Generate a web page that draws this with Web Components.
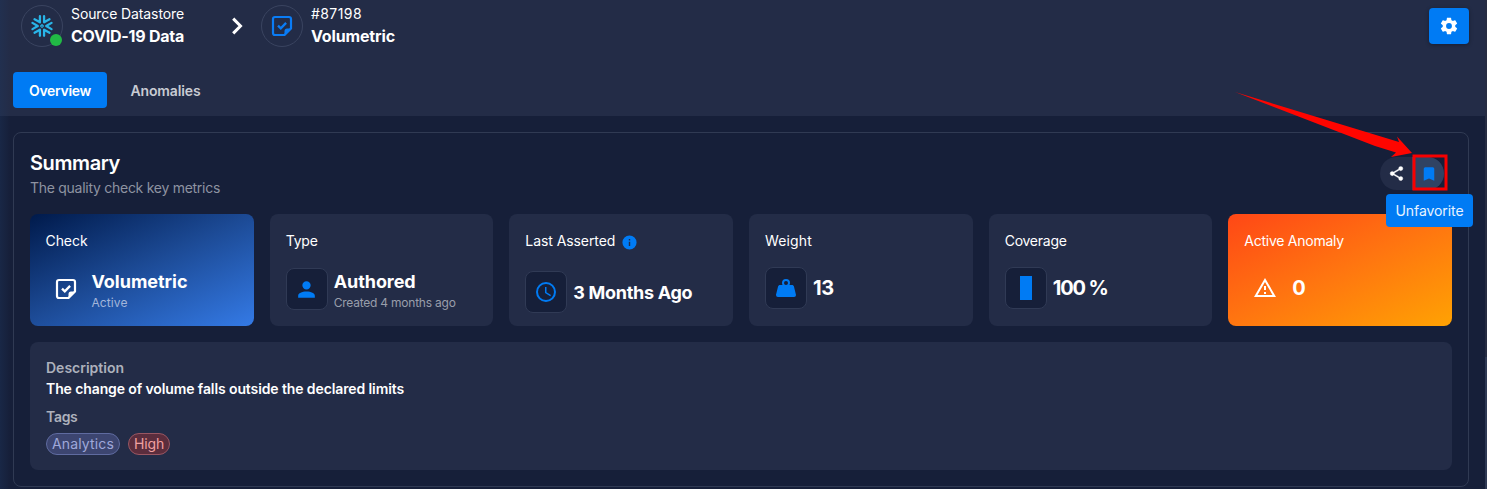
<!DOCTYPE html>
<html lang="en">
<head>
<meta charset="utf-8">
<title>Volumetric check</title>
<style>
html,body{margin:0;height:489px;overflow:hidden;background:#161f39}
body{font-family:Inter,"Noto Sans",sans-serif;color:#fff}
</style>
</head>
<body>
<check-page></check-page>
<script>
const define = (name, html, init) => {
  const t = document.createElement('template');
  t.innerHTML = html;
  customElements.define(name, class extends HTMLElement {
    connectedCallback() {
      if (this.shadowRoot) return;
      this.attachShadow({ mode: 'open' }).append(t.content.cloneNode(true));
      if (init) init(this, this.shadowRoot);
    }
  });
};

/* Icons, drawn in a 24-unit box */
const note = '<path d="M21 14.500V5a2 2 0 0 0-2-2H5a2 2 0 0 0-2 2v14a2 2 0 0 0 2 2h9.500z" fill="none" stroke="currentColor" stroke-width="2.200" stroke-linejoin="round"/><path d="M21 14.500H17a2.500 2.500 0 0 0-2.500 2.500v4z" fill="currentColor"/><path d="M8 11.600l2.800 2.700 5.300-5.400" fill="none" stroke="currentColor" stroke-width="2.300"/>';
/* Six inward chevrons around a small diamond */
const flake = '<g fill="none" stroke="#29b5e8" stroke-width="2.500" stroke-linecap="round" stroke-linejoin="round">' +
  [0, 60, 120, 180, 240, 300].map(a => `<path transform="rotate(${a} 12 12)" d="M22.400 8.600L16.600 12l5.800 3.400"/>`).join('') +
  '<path d="M12 10.500L13.500 12 12 13.500 10.500 12z" stroke-width="1.300"/></g>';
const icons = {
  note,
  flake,
  chevron: '<path d="M8.200 4.600l7.300 7.400-7.300 7.400" fill="none" stroke="currentColor" stroke-width="3"/>',
  gear: '<path fill="currentColor" d="M12 15.500A3.500 3.500 0 1 1 12 8.500a3.500 3.500 0 0 1 0 7M19.430 12.970c.04-.32.07-.64.07-.97s-.03-.66-.07-1l2.110-1.630c.19-.15.24-.42.12-.64l-2-3.460c-.12-.22-.39-.31-.61-.22l-2.490 1c-.52-.39-1.060-.73-1.690-.98l-.37-2.650A.506.506 0 0 0 14 2h-4c-.25 0-.46.18-.5.42l-.37 2.650c-.63.25-1.170.59-1.690.98l-2.490-1c-.22-.09-.49 0-.61.22l-2 3.460c-.13.22-.07.49.12.64L4.570 11c-.04.34-.07.67-.07 1s.03.65.07.97l-2.110 1.660c-.19.15-.25.42-.12.64l2 3.460c.12.22.39.3.61.22l2.490-1.010c.52.4 1.060.74 1.690.99l.37 2.650c.04.24.25.42.5.42h4c.25 0 .46-.18.5-.42l.37-2.650c.63-.26 1.170-.59 1.690-.99l2.490 1.010c.22.08.49 0 .61-.22l2-3.460c.12-.22.07-.49-.12-.64z"/>',
  person: '<path fill="currentColor" d="M12 4a4 4 0 1 1 0 8 4 4 0 0 1 0-8m0 10c4.420 0 8 1.790 8 4v2H4v-2c0-2.210 3.580-4 8-4"/>',
  clock: '<path fill="currentColor" d="M12 20a8 8 0 1 0 0-16 8 8 0 0 0 0 16m0-18a10 10 0 1 1 0 20 10 10 0 0 1 0-20m.500 5v5.250l4.500 2.670-.75 1.230L11 13V7z"/>',
  info: '<path fill="currentColor" d="M13 9h-2V7h2m0 10h-2v-6h2m-1-9a10 10 0 1 0 0 20 10 10 0 0 0 0-20"/>',
  weight: '<path fill="currentColor" d="M12 3a4 4 0 0 1 4 4c0 .730-.190 1.410-.540 2H18c.950 0 1.750.670 1.950 1.560C21.960 18.570 22 18.780 22 19a2 2 0 0 1-2 2H4a2 2 0 0 1-2-2c0-.220.040-.430 2.050-8.440C4.250 9.670 5.050 9 6 9h2.540A3.900 3.900 0 0 1 8 7a4 4 0 0 1 4-4m0 2a2 2 0 1 0 0 4 2 2 0 0 0 0-4"/>',
  column: '<path fill="currentColor" d="M6 0h12v24H6z"/>',
  alert: '<path fill="currentColor" d="M12 2L1 21h22M12 6l7.530 13H4.470M11 10v4h2v-4m-2 6v2h2v-2"/>',
  share: '<path fill="currentColor" stroke="currentColor" stroke-width=".5" d="M18 16.080c-.76 0-1.440.3-1.960.77L8.910 12.700c.05-.23.09-.46.09-.7s-.04-.47-.09-.7l7.050-4.110c.54.5 1.250.81 2.040.81a3 3 0 1 0-3-3c0 .24.04.47.09.7L8.040 9.810C7.500 9.310 6.790 9 6 9a3 3 0 1 0 0 6c.79 0 1.500-.31 2.040-.81l7.120 4.150c-.05.21-.08.43-.08.66 0 1.610 1.310 2.910 2.920 2.910s2.920-1.300 2.920-2.910A2.920 2.920 0 0 0 18 16.080"/>',
  bookmark: '<path fill="currentColor" d="M17 3H7a2 2 0 0 0-2 2v16l7-3 7 3V5a2 2 0 0 0-2-2"/>'
};
define('q-icon', '<style>:host{display:block;flex:none}svg{display:block;overflow:visible}</style><svg viewBox="0 0 24 24"></svg>', (el, r) => {
  const s = r.querySelector('svg'), z = el.getAttribute('size') || 24;
  s.setAttribute('width', z); s.setAttribute('height', z);
  s.innerHTML = icons[el.getAttribute('name')];
});

/* One line of text, tracked so that it fills the width of its "w" attribute */
define('q-text', '<style>:host{display:block;white-space:nowrap;flex:none}span{display:inline-block}</style><span><slot></slot></span>', (el, r) => {
  const s = r.querySelector('span'), w = +el.getAttribute('w');
  const [size, weight, line] = el.getAttribute('type').split(' ');
  el.style.fontSize = size + 'px'; el.style.fontWeight = weight; el.style.lineHeight = line + 'px';
  if (w) {
    s.style.letterSpacing = (w - s.getBoundingClientRect().width) / el.textContent.length + 'px';
    el.style.width = w + 'px';
  }
});

define('crumb-item', `<style>
:host{display:flex;align-items:center;gap:8px;height:42px}
.c{position:relative;box-sizing:border-box;width:42px;height:42px;border:1px solid #3a4460;border-radius:50%;display:grid;place-items:center;color:#0a7cf5}
.dot{position:absolute;right:0;bottom:0;width:12px;height:12px;border-radius:50%;background:#21ba45}
:host(:not([online])) .dot{display:none}
.t{display:grid;margin-bottom:2px}
</style><div class="c"><slot name="icon"></slot><i class="dot"></i></div><div class="t"><slot></slot></div>`);

define('page-header', `<style>
:host{display:flex;flex-direction:column;box-sizing:border-box;height:116px;background:#232c47;padding:5px 18px 8px 13px}
.top{display:flex;align-items:flex-start;height:67px;padding-left:8px}
.chev{margin:9px 12px 0 41px}
.gear{margin:3px 0 0 auto;width:40px;height:36px;border-radius:4px;background:#007bf4;display:grid;place-items:center;box-shadow:0 1px 4px #0005}
.tabs{display:flex;gap:8px}
.tab{height:36px;display:flex;align-items:center;padding:1px 16px 0;box-sizing:border-box;color:#c8cbd3}
.tab:not(.on){padding-left:15.500px}
.on{background:#007bf4;border-radius:4px;color:#fff}
</style>
<div class="top">
<crumb-item online><q-icon slot="icon" name="flake" size="22"></q-icon><q-text type="14 400 22" w="113">Source Datastore</q-text><q-text type="16 700 22" w="113">COVID-19 Data</q-text></crumb-item>
<q-icon class="chev" name="chevron" size="24"></q-icon>
<crumb-item><q-icon slot="icon" name="note" size="24"></q-icon><q-text type="14 400 22" w="51">#87198</q-text><q-text type="16 700 22" w="84">Volumetric</q-text></crumb-item>
<div class="gear"><q-icon name="gear" size="20"></q-icon></div>
</div>
<div class="tabs"><div class="tab on"><q-text type="14 600 20" w="62">Overview</q-text></div><div class="tab"><q-text type="14 600 20" w="70">Anomalies</q-text></div></div>`);

define('metric-card', `<style>
:host{display:flex;flex-direction:column;box-sizing:border-box;height:112px;border-radius:8px;background:#232c47;padding:17px 15px 0 16px;--box:42px}
:host([tone=blue]){background:linear-gradient(155deg,#001a4b 0%,#1c4a95 48%,#347ae6 100%);--box:40px;padding-left:15.500px}
:host([tone=orange]){background:linear-gradient(155deg,#ff4716 0%,#ff7510 50%,#ffa203 100%)}
.label{display:flex;gap:6px;height:20px;align-items:center}
.row{display:flex;gap:6px;align-items:center;height:42px;margin-top:var(--top,17px)}
.box{box-sizing:border-box;width:var(--box);height:42px;display:grid;place-items:center;border:1px solid #303a55;border-radius:8px;background:#161f39;color:#007bf4;flex:none}
:host([tone]) .box{border-color:transparent;background:none;color:#fff}
.v{display:grid;padding-top:var(--drop,6px)}
::slotted([slot=sub]){color:#999eab}
:host([tone=blue]) ::slotted([slot=sub]){color:#a3b6da}
::slotted([slot=info]){color:#007bf4;margin-top:3px}
</style>
<div class="label"><slot name="label"></slot><slot name="info"></slot></div>
<div class="row"><div class="box"><slot name="icon"></slot></div><div class="v"><slot></slot><slot name="sub"></slot></div></div>`);

define('tag-chip', `<style>:host{display:flex;box-sizing:border-box;height:22px;align-items:center;padding:0 5px;border:1px solid #5f6ba0;border-radius:11px;background:#3c4570;color:#9fa8da}
:host([high]){border-color:#995662;background:#5b2d3d;color:#f0a0a0}</style><slot></slot>`);

define('callout-arrow', `<style>:host{position:absolute;left:1230px;top:86px;pointer-events:none}svg{display:block}</style>
<svg width="224" height="110"><path d="M5 6L169 56 167 50.500 182 67 161 71 166 66.500 145 60z" fill="#ff0500"/><rect x="184" y="70" width="32" height="33" fill="none" stroke="#f80000" stroke-width="3"/></svg>`);

define('action-pill', `<style>
:host{display:flex;position:relative;width:64px;height:33px;border-radius:17px;background:#232c47}
div{flex:1 0 0;box-sizing:border-box;display:grid;place-items:center}
.share{padding-left:1px}
.fav{background:#304363;border-radius:0 17px 17px 0;color:#007bf4;padding-left:1px}
.tip{position:absolute;left:6px;top:37px;width:87px;height:33px;border-radius:4px;background:#007bf4;color:#e9f3ff;z-index:2}
</style><div class="share"><q-icon name="share" size="17"></q-icon></div><div class="fav"><q-icon name="bookmark" size="18"></q-icon></div><div class="tip"><q-text type="14 400 20" w="68">Unfavorite</q-text></div>`);

define('check-page', `<style>
:host{display:block;position:relative;width:1487px;height:489px;background:#161f39}
.edge{position:absolute;left:0;top:0;width:10px;height:489px;background:linear-gradient(90deg,#1f386055,#1f386000)}
.bar{position:absolute;right:0;top:0;width:2px;height:489px;background:linear-gradient(#262c42 0 357px,#2f3954 357px)}
.card{box-sizing:border-box;margin:16px 18px 0 13px;height:355px;border:1px solid #303a53;border-radius:8px;padding:17px 16px 0}
.head{display:flex;justify-content:space-between;height:64px}
.ttl{display:grid;align-content:start}
.sub{color:#8e93a1}
action-pill{margin:7px 8px 0 0}
.grid{display:grid;grid-template-columns:repeat(6,1fr);gap:16px}
.desc{box-sizing:border-box;margin-top:16px;height:128px;border-radius:8px;background:#232c47;padding:16px}
.mut{color:#adb1bc}
.tags{display:flex;gap:8px;margin-top:6px}
</style>
<page-header></page-header>
<section class="card">
<div class="head"><div class="ttl"><q-text type="20 600 26" w="90">Summary</q-text><q-text class="sub" type="14 400 24" w="190">The quality check key metrics</q-text></div><action-pill></action-pill></div>
<div class="grid">
<metric-card tone="blue"><q-text slot="label" type="14 400 20" w="42">Check</q-text><q-icon slot="icon" name="note" size="24"></q-icon><q-text type="18 700 22" w="96">Volumetric</q-text><q-text slot="sub" type="12 400 20" w="36">Active</q-text></metric-card>
<metric-card><q-text slot="label" type="14 400 20" w="32">Type</q-text><q-icon slot="icon" name="person" size="25"></q-icon><q-text type="18 700 22" w="82">Authored</q-text><q-text slot="sub" type="12 400 20" w="122">Created 4 months ago</q-text></metric-card>
<metric-card style="--top:20px;--drop:2px"><q-text slot="label" type="14 400 20" w="90">Last Asserted</q-text><q-icon slot="info" name="info" size="17"></q-icon><q-icon slot="icon" name="clock" size="24"></q-icon><q-text type="18 700 26" w="119">3 Months Ago</q-text></metric-card>
<metric-card style="--top:16px;--drop:0px"><q-text slot="label" type="14 400 20" w="47">Weight</q-text><q-icon slot="icon" name="weight" size="24"></q-icon><q-text type="20 700 26" w="21">13</q-text></metric-card>
<metric-card style="--top:16px;--drop:0px"><q-text slot="label" type="14 400 20" w="62">Coverage</q-text><q-icon slot="icon" name="column" size="24"></q-icon><q-text type="20 700 26" w="55">100 %</q-text></metric-card>
<metric-card tone="orange" style="--top:16px;--drop:0px"><q-text slot="label" type="14 400 20" w="99.500">Active Anomaly</q-text><q-icon slot="icon" name="alert" size="24"></q-icon><q-text type="20 700 26" w="14">0</q-text></metric-card>
</div>
<div class="desc">
<q-text class="mut" type="14 600 20" w="78">Description</q-text>
<q-text type="14 600 22" w="358">The change of volume falls outside the declared limits</q-text>
<q-text class="mut" type="14 600 20" w="31.500" style="margin-top:7px">Tags</q-text>
<div class="tags"><tag-chip><q-text type="14 400 20" w="62">Analytics</q-text></tag-chip><tag-chip high><q-text type="14 400 20" w="30">High</q-text></tag-chip></div>
</div>
</section>
<i class="edge"></i><i class="bar"></i>
<callout-arrow></callout-arrow>`);
</script>
</body>
</html>
